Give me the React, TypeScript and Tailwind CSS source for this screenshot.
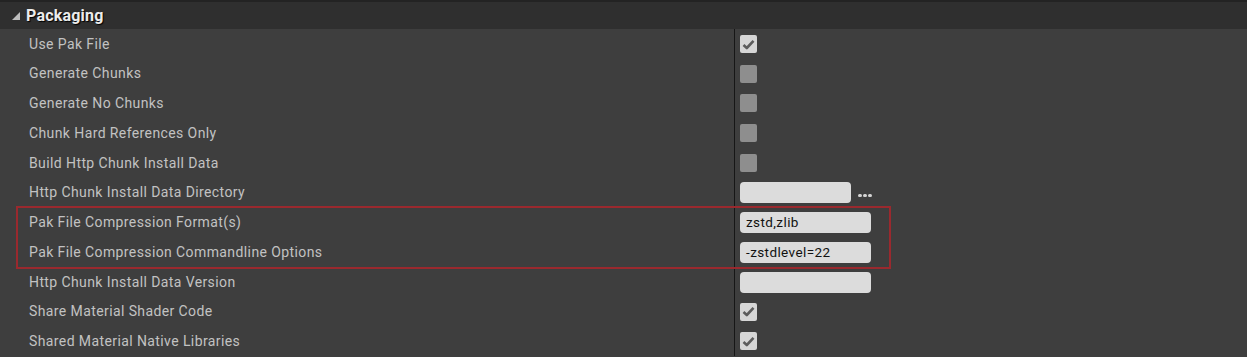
import React from "react";

type Row =
  | { label: string; h: number; kind: "check"; checked: boolean }
  | { label: string; h: number; kind: "text"; value: string; browse?: boolean };

const rows: Row[] = [
  { label: "Use Pak File", h: 30, kind: "check", checked: true },
  { label: "Generate Chunks", h: 29, kind: "check", checked: false },
  { label: "Generate No Chunks", h: 30, kind: "check", checked: false },
  { label: "Chunk Hard References Only", h: 30, kind: "check", checked: false },
  { label: "Build Http Chunk Install Data", h: 30, kind: "check", checked: false },
  { label: "Http Chunk Install Data Directory", h: 29, kind: "text", value: "", browse: true },
  { label: "Pak File Compression Format(s)", h: 30, kind: "text", value: "zstd,zlib" },
  { label: "Pak File Compression Commandline Options", h: 30, kind: "text", value: "-zstdlevel=22" },
  { label: "Http Chunk Install Data Version", h: 30, kind: "text", value: "" },
  { label: "Share Material Shader Code", h: 29, kind: "check", checked: true },
  { label: "Shared Material Native Libraries", h: 30, kind: "check", checked: true },
];

function CheckBox({ checked }: { checked: boolean }) {
  return (
    <div
      className={`w-[17px] h-[18px] rounded-[2px] flex items-center justify-center ${
        checked ? "bg-[#d6d6d6]" : "bg-[#8e8e8e]"
      }`}
    >
      {checked && (
        <svg width="13" height="11" viewBox="0 0 13 11">
          <path d="M1.5 6 L4.8 9 L11.5 1.8" fill="none" stroke="#5c5c5c" strokeWidth="2.6" strokeLinejoin="round" />
        </svg>
      )}
    </div>
  );
}

function PropRow({ row }: { row: Row }) {
  return (
    <div className={`flex items-center ${row.h === 29 ? "h-[29px]" : "h-[30px]"}`}>
      <div className="w-[734px] pl-[29px] text-[14px] tracking-[0.4px] text-[#c2c2c2] shrink-0">{row.label}</div>
      <div className="h-full w-px bg-[#161616]" />
      <div className="flex items-center pl-[5px]">
        {row.kind === "check" ? (
          <CheckBox checked={row.checked} />
        ) : (
          <>
            <div
              className={`h-[21px] rounded-[4px] bg-[#dcdcdc] text-[#111] text-[13.5px] tracking-[0.4px] pl-[6px] flex items-center ${
                row.browse ? "w-[111px]" : "w-[131px]"
              }`}
            >
              {row.value}
            </div>
            {row.browse && (
              <div className="ml-[7px] mt-[6px] flex gap-[1.5px]">
                <span className="w-[3.5px] h-[3.5px] rounded-full bg-[#d4d4d4]" />
                <span className="w-[3.5px] h-[3.5px] rounded-full bg-[#d4d4d4]" />
                <span className="w-[3.5px] h-[3.5px] rounded-full bg-[#d4d4d4]" />
              </div>
            )}
          </>
        )}
      </div>
    </div>
  );
}

export default function App() {
  return (
    <div className="w-[1247px] h-[357px] overflow-hidden bg-[#3e3e3e]" style={{ fontFamily: "Roboto, 'Noto Sans', sans-serif" }}>
      <div className="h-[2px] bg-[#232323]" />
      <div className="h-[27px] bg-[#2f2f2f] flex items-center">
        <svg className="ml-[12px]" width="8" height="8" viewBox="0 0 8 8">
          <path d="M8 0 L8 8 L0 8 Z" fill="#bdbdbd" />
        </svg>
        <span className="ml-[6px] text-[16px] font-bold text-[#ececec] tracking-[0.2px] [text-shadow:1px_1px_1px_#000]">
          Packaging
        </span>
      </div>
      {rows.slice(0, 6).map((r) => (
        <PropRow key={r.label} row={r} />
      ))}
      <div className="relative">
        {rows.slice(6, 8).map((r) => (
          <PropRow key={r.label} row={r} />
        ))}
        {/* highlight frame around the compression settings */}
        <div className="pointer-events-none absolute left-[16px] -top-px w-[875px] h-[63px] border-2 border-solid border-[#9a292e]" />
      </div>
      {rows.slice(8).map((r) => (
        <PropRow key={r.label} row={r} />
      ))}
    </div>
  );
}
